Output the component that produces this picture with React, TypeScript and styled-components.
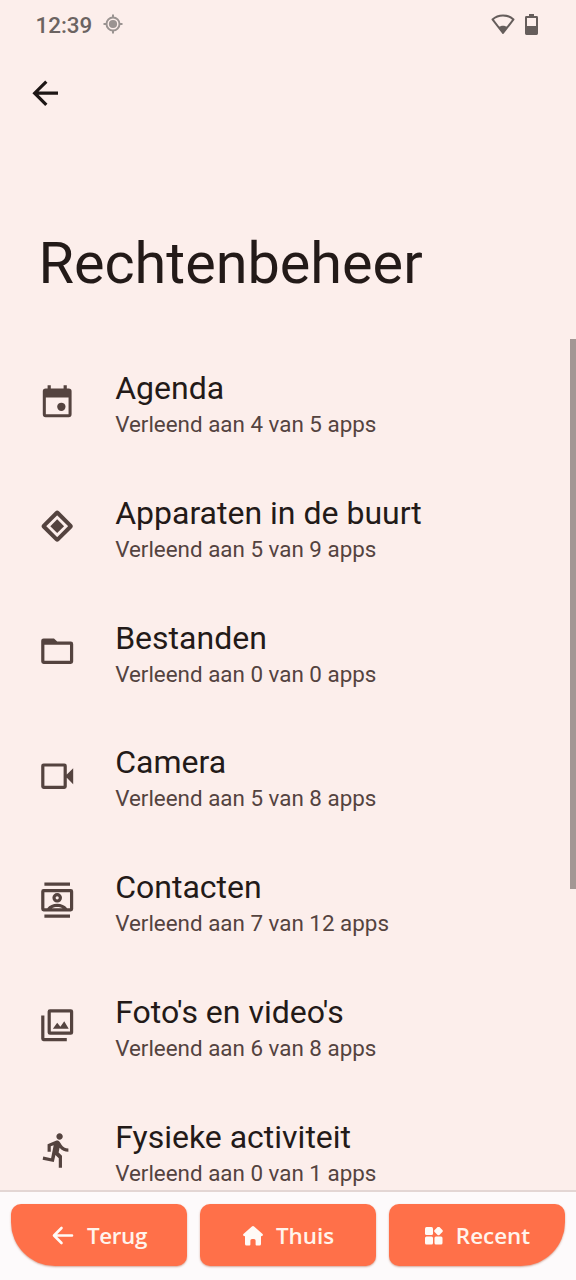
import React from "react";
import styled, { createGlobalStyle } from "styled-components";

const GlobalStyle = createGlobalStyle`
  * { box-sizing: border-box; }
  body { margin: 0; background: #fceeeb; }
`;

const Screen = styled.div`
  display: flex;
  flex-direction: column;
  width: 576px;
  height: 1280px;
  overflow: hidden;
  background: #fceeeb;
  color: #231a18;
  font-family: Roboto, sans-serif;
`;

const StatusBar = styled.header`
  display: flex;
  align-items: center;
  height: 48px;
  padding: 0 38px 0 35.5px;
  color: #6b6361;
`;

const Clock = styled.span`
  width: 57px;
  margin-top: 1px;
  font-size: 22.4px;
  font-weight: 500;
  line-height: 26px;
  white-space: nowrap;
`;

const LocationIcon = styled.svg`
  width: 20px;
  height: 20px;
  margin-left: 10.5px;
`;

const StatusIcons = styled.div`
  display: flex;
  align-items: center;
  gap: 10px;
  margin-left: auto;
`;

const Toolbar = styled.nav`
  display: flex;
  align-items: center;
  height: 90px;
  padding-left: 25.6px;
`;

const BackButton = styled.button`
  display: flex;
  padding: 0;
  border: 0;
  background: none;
  color: #1d1615;
`;

const PageTitle = styled.h1`
  height: 201px;
  margin: 0;
  padding: 92px 0 0 38.4px;
  font-size: 57.6px;
  font-weight: 400;
  line-height: 68px;
  white-space: nowrap;
`;

const ListArea = styled.main`
  position: relative;
  height: 851px;
  overflow: hidden;
`;

const List = styled.ul`
  margin: 0;
  padding: 0;
  list-style: none;
`;

const Row = styled.li`
  display: flex;
  align-items: center;
  height: 124.8px;
  padding-left: 38.4px;
  gap: 38.4px;
`;

const RowIcon = styled.svg`
  flex: none;
  width: 38.4px;
  height: 38.4px;
  fill: #54433f;
`;

const RowText = styled.div`
  display: flex;
  flex-direction: column;
  gap: 4px;
  padding-top: 3.2px;
  white-space: nowrap;
`;

const RowTitle = styled.span`
  font-size: 32px;
  line-height: 38px;
`;

const RowSummary = styled.span`
  font-size: 22.4px;
  line-height: 26px;
  color: #54433f;
`;

const ScrollThumb = styled.div`
  position: absolute;
  top: 0;
  right: 0;
  width: 6.4px;
  height: 550px;
  background: #a39794;
`;

const BottomBar = styled.footer`
  display: flex;
  gap: 13px;
  height: 90px;
  padding: 12px 11px 0;
  border-top: 2px solid #e3d6d4;
  background: #fdfafb;
`;

const NavButton = styled.button<{ $corners: string }>`
  display: flex;
  align-items: center;
  justify-content: center;
  gap: 13px;
  flex: 1;
  height: 62px;
  padding: 0 0 0 1px;
  border: 0;
  border-radius: ${(p) => p.$corners};
  background: #ff7049;
  box-shadow: 0 1px 2px rgba(160, 70, 40, 0.45);
  color: #fff4ec;
  font-family: "Open Sans", sans-serif;
  font-size: 22.4px;
  font-weight: 600;
`;

const NavIcon = styled.svg`
  flex: none;
  margin-top: 1px;
  color: #fffaf6;
`;

const NavLabel = styled.span<{ $spacing: number }>`
  margin-top: 2px;
  line-height: 30px;
  letter-spacing: ${(p) => p.$spacing}px;
`;

const permissions = [
  {
    title: "Agenda",
    summary: "Verleend aan 4 van 5 apps",
    icon: (
      <>
        <path fillRule="evenodd" d="M6 2h2v2h8V2h2v2h1.2A1.8 1.8 0 0 1 21 5.800V20.200A1.800 1.800 0 0 1 19.200 22H4.800A1.800 1.800 0 0 1 3 20.200V5.800A1.800 1.800 0 0 1 4.800 4H6zM4.900 9.700v10.400h14.200V9.700z" />
        <circle cx="14.600" cy="15.500" r="2.600" />
      </>
    ),
  },
  {
    title: "Apparaten in de buurt",
    summary: "Verleend aan 5 van 9 apps",
    icon: (
      <>
        <rect x="5.900" y="5.900" width="12.200" height="12.200" rx="0.500" transform="rotate(45 12 12)" fill="none" stroke="#54433f" strokeWidth="2.500" />
        <path d="M12 7.700 16.300 12 12 16.300 7.700 12z" />
      </>
    ),
  },
  {
    title: "Bestanden",
    summary: "Verleend aan 0 van 0 apps",
    icon: (
      <path fillRule="evenodd" d="M3.500 4H10l2 2h8.500A1.500 1.500 0 0 1 22 7.500v11a1.500 1.500 0 0 1-1.500 1.500h-17A1.500 1.500 0 0 1 2 18.500v-13A1.500 1.500 0 0 1 3.500 4zM4 8v10h16V8z" />
    ),
  },
  {
    title: "Camera",
    summary: "Verleend aan 5 van 8 apps",
    icon: (
      <path fillRule="evenodd" d="M3.500 4h13A1.500 1.500 0 0 1 18 5.500V11l4-4v10l-4-4v5.500a1.500 1.500 0 0 1-1.500 1.500h-13A1.500 1.500 0 0 1 2 18.500v-13A1.500 1.500 0 0 1 3.500 4zM4 6v12h12V6z" />
    ),
  },
  {
    title: "Contacten",
    summary: "Verleend aan 7 van 12 apps",
    icon: (
      <>
        <path d="M4 1h16v2H4zM4 21h16v2H4z" />
        <path fillRule="evenodd" d="M3.500 5h17A1.500 1.500 0 0 1 22 6.500v11a1.500 1.500 0 0 1-1.500 1.500h-17A1.500 1.500 0 0 1 2 17.500v-11A1.500 1.500 0 0 1 3.500 5zM4 7v10h1.800c1.400-1.700 3.600-2.700 6.200-2.700s4.800 1 6.200 2.700H20V7zM8.600 17h6.800c-1-.5-2.200-.8-3.400-.8s-2.400.3-3.400.8z" />
        <circle cx="12" cy="10.500" r="2" fill="none" stroke="#54433f" strokeWidth="2" />
      </>
    ),
  },
  {
    title: "Foto's en video's",
    summary: "Verleend aan 6 van 8 apps",
    icon: (
      <>
        <path fillRule="evenodd" d="M7.500 2h13A1.500 1.500 0 0 1 22 3.500v13a1.500 1.500 0 0 1-1.500 1.500h-13A1.500 1.500 0 0 1 6 16.500v-13A1.500 1.500 0 0 1 7.500 2zM8 4v12h12V4z" />
        <path d="M2 6h2v14h14v2H3.500A1.500 1.500 0 0 1 2 20.500zM9.300 14.200l2.700-3.700 2 2.500 2.400-3.400 2.800 4.600z" />
      </>
    ),
  },
  {
    title: "Fysieke activiteit",
    summary: "Verleend aan 0 van 1 apps",
    icon: (
      <path d="M13.490 5.480c1.100 0 2-.9 2-2s-.9-2-2-2-2 .9-2 2 .9 2 2 2zm-3.600 13.900 1-4.400 2.100 2v6h2v-7.500l-2.100-2 .6-3c1.300 1.500 3.300 2.500 5.500 2.500v-2c-1.900 0-3.500-1-4.300-2.400l-1-1.600c-.4-.6-1-1-1.700-1-.3 0-.5.1-.8.1l-5.200 2.200v4.700h2v-3.400l1.800-.7-1.600 8.100-4.900-1-.4 2z" />
    ),
  },
];

const App = () => (
  <>
    <GlobalStyle />
    <Screen>
      <StatusBar>
        <Clock>12:39</Clock>
        <LocationIcon viewBox="0 0 20 20">
          <circle cx="10" cy="10" r="6.500" fill="none" stroke="#9a9391" strokeWidth="2" />
          <circle cx="10" cy="10" r="4.100" fill="#9a9391" />
          <path d="M10 .5V4M10 16v3.500M.5 10H4M16 10h3.500" stroke="#9a9391" strokeWidth="2" />
        </LocationIcon>
        <StatusIcons>
          <svg width="24" height="21" viewBox="0 0 24 21">
            <path d="M1.500 5.400C4.300 2.800 8 1.400 12 1.400s7.700 1.400 10.500 4L12 19z" fill="none" stroke="#655d5b" strokeWidth="2" strokeLinejoin="round" />
            <path d="M7.500 13.300c2.600-2 6.400-2 9 0L12 19.500z" fill="#655d5b" />
          </svg>
          <svg width="13" height="21" viewBox="0 0 13 21">
            <path fillRule="evenodd" fill="#655d5b" d="M4 0h5v2h2.600q1.400 0 1.400 1.400v16.200q0 1.400-1.400 1.400H1.400Q0 21 0 19.600V3.400Q0 2 1.400 2H4zM2 4v8h9V4z" />
          </svg>
        </StatusIcons>
      </StatusBar>
      <Toolbar>
        <BackButton aria-label="Terug">
          <svg width="38.400" height="38.400" viewBox="0 0 24 24" fill="currentColor">
            <path d="M20 11H7.830l5.590-5.590L12 4l-8 8 8 8 1.410-1.410L7.830 13H20z" />
          </svg>
        </BackButton>
      </Toolbar>
      <PageTitle>Rechtenbeheer</PageTitle>
      <ListArea>
        <List>
          {permissions.map((p) => (
            <Row key={p.title}>
              <RowIcon viewBox="0 0 24 24">{p.icon}</RowIcon>
              <RowText>
                <RowTitle>{p.title}</RowTitle>
                <RowSummary>{p.summary}</RowSummary>
              </RowText>
            </Row>
          ))}
        </List>
        <ScrollThumb />
      </ListArea>
      <BottomBar>
        <NavButton $corners="10px 10px 10px 44px">
          <NavIcon width="22" height="20" viewBox="0 0 22 20" fill="none" stroke="currentColor" strokeWidth="2.600" strokeLinecap="round" strokeLinejoin="round">
            <path d="M20 9.500H2.500M9.500 2 2 9.500 9.500 17" />
          </NavIcon>
          <NavLabel $spacing={-0.4}>Terug</NavLabel>
        </NavButton>
        <NavButton $corners="10px">
          <NavIcon width="20" height="20" viewBox="0 0 20 20" fill="currentColor">
            <path d="M8.900.5q1.100-.9 2.200 0l8.200 7.200q1 1 .4 1.900-.4.600-1.700.6V18q0 1.500-1.500 1.500h-3q-.9 0-.9-.9v-4q0-1.600-1.600-1.600H9q-1.600 0-1.600 1.600v4q0 .9-.9.900h-3Q2 19.500 2 18v-7.800q-1.300 0-1.700-.6-.6-.9.400-1.900z" />
          </NavIcon>
          <NavLabel $spacing={0}>Thuis</NavLabel>
        </NavButton>
        <NavButton $corners="10px 10px 44px 10px">
          <NavIcon width="18" height="18" viewBox="0 0 18 18" fill="currentColor">
            <rect width="8" height="8" rx="1.500" />
            <rect y="9.500" width="8" height="8" rx="1.500" />
            <rect x="9.500" y="9.500" width="8" height="8" rx="1.500" />
            <rect x="10.100" y="0.600" width="6.800" height="6.800" rx="1.300" transform="rotate(45 13.500 4)" />
          </NavIcon>
          <NavLabel $spacing={0}>Recent</NavLabel>
        </NavButton>
      </BottomBar>
    </Screen>
  </>
);

export default App;
